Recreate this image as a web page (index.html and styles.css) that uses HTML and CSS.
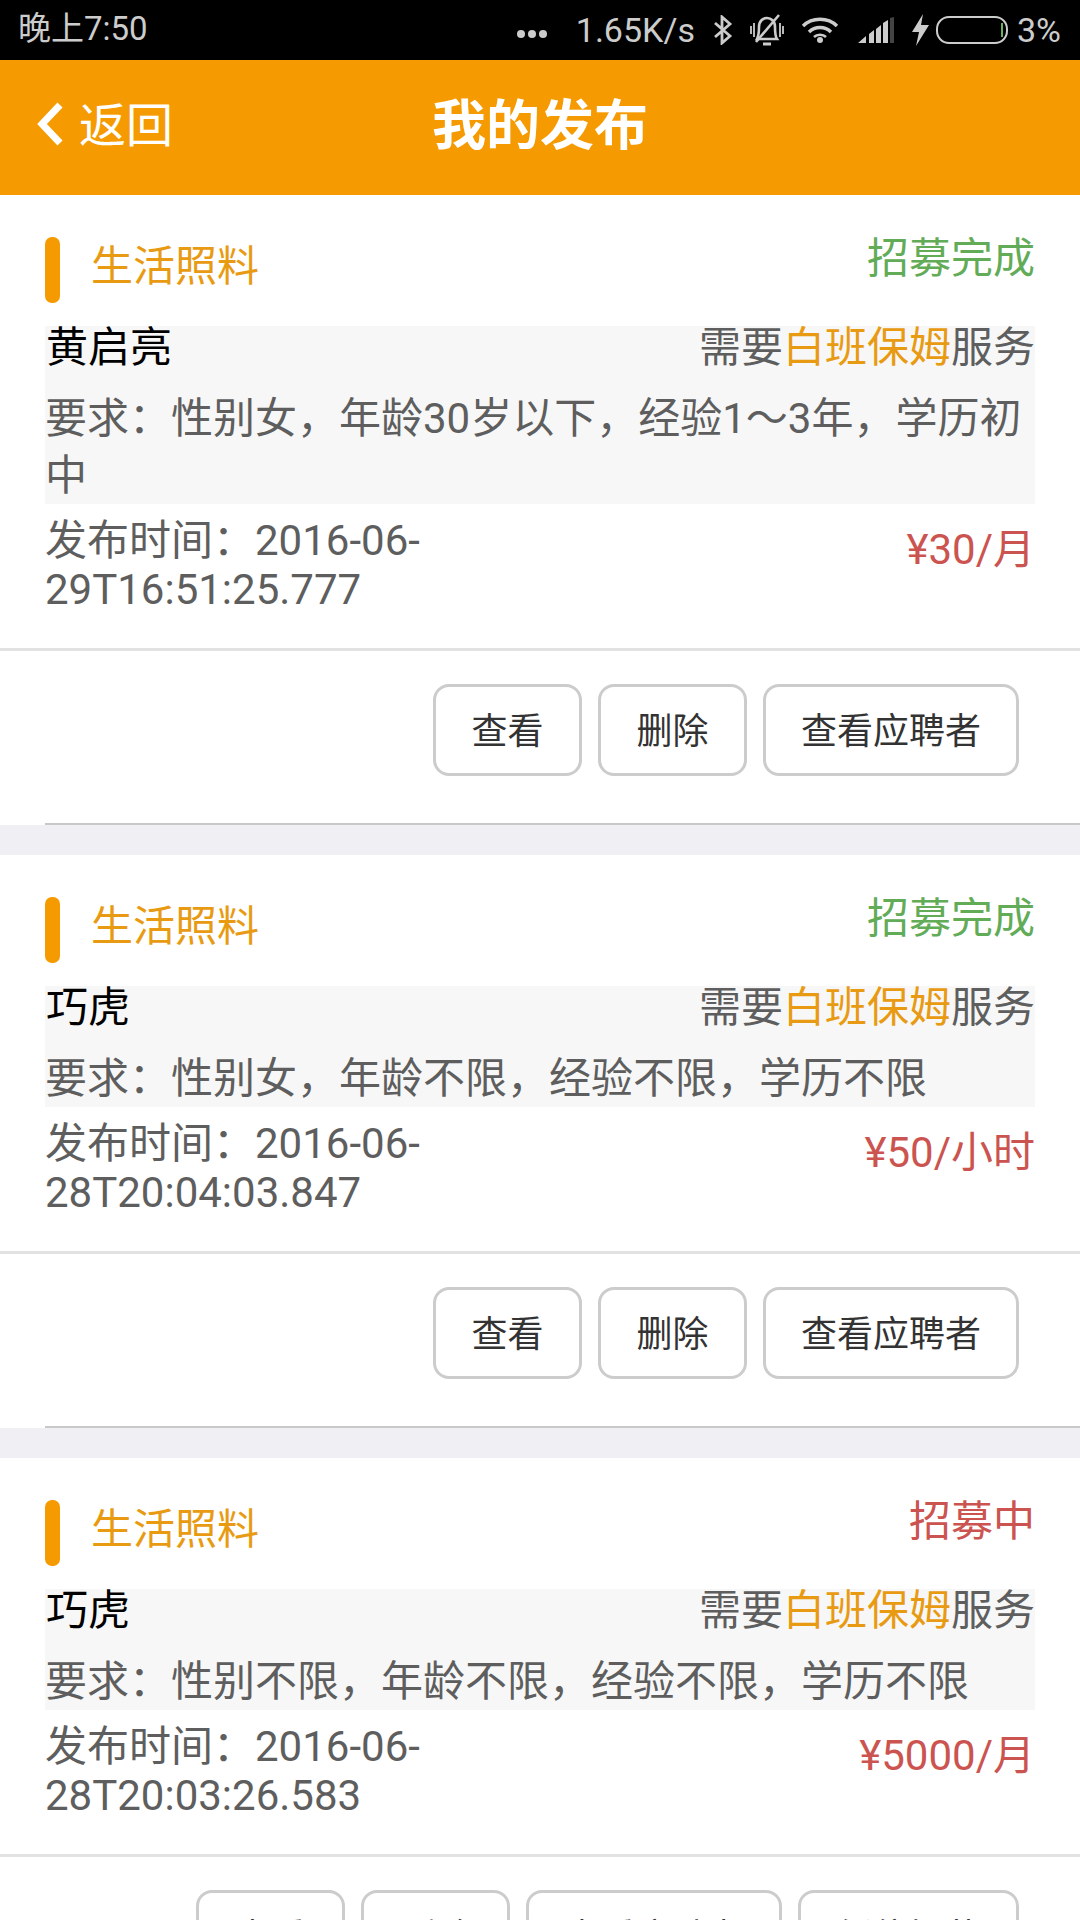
FILE: index.html
```html
<!DOCTYPE html>
<html lang="zh-CN">
  <head>
    <meta charset="UTF-8" />
    <title>我的发布</title>
    <link rel="stylesheet" href="styles.css">
  </head>
  <body>
    <div class="page">
      <div class="status-bar">
        <span class="clock">晚上7:50</span>
        <div class="status-right">
          <svg class="ic-dots" width="32" height="10" viewBox="0 0 32 10"><circle cx="5" cy="5" r="4" fill="#ccc"/><circle cx="16" cy="5" r="4" fill="#ccc"/><circle cx="27" cy="5" r="4" fill="#ccc"/></svg>
          <span class="speed">1.65K/s</span>
          <svg class="ic-bt" width="20" height="30" viewBox="0 0 20 30"><path d="M2 8 L17 21 L9 28 V2 L17 9 L2 22" fill="none" stroke="#ccc" stroke-width="2.8"/></svg>
          <svg class="ic-bell" width="34" height="32" viewBox="0 0 34 32"><path d="M7 25 C9 21 9 17 9 13 C9 7 13 4 17 4 C21 4 25 7 25 13 C25 18 25 22 27 25 Z" fill="none" stroke="#ccc" stroke-width="2.6"/><path d="M13 30 H21" stroke="#ccc" stroke-width="3"/><path d="M6 28 L29 1" stroke="#ccc" stroke-width="2.6"/><path d="M1 12 V20 M4 9 V23 M30 9 V23 M33 12 V20" stroke="#ccc" stroke-width="1.8"/></svg>
          <svg class="ic-wifi" width="38" height="26" viewBox="0 0 38 26"><path d="M2 9 C11 0 27 0 36 9" fill="none" stroke="#ccc" stroke-width="3.4"/><path d="M8 15 C14 9 24 9 30 15" fill="none" stroke="#ccc" stroke-width="3.4"/><path d="M13 20 C16 17 22 17 25 20" fill="none" stroke="#ccc" stroke-width="2.6"/><circle cx="19" cy="23" r="3" fill="#ccc"/></svg>
          <svg class="ic-signal" width="36" height="26" viewBox="0 0 36 26"><path d="M0 26 L8 19 V26 Z M11 26 V17 L16 13 V26 Z M18 26 V12 L23 8 V26 Z M25 26 V6 L30 3 V26 Z" fill="#ccc"/><path d="M32 26 V1 L36 0 V26 Z" fill="#444"/></svg>
          <svg class="ic-bolt" width="17" height="32" viewBox="0 0 17 32"><path d="M11 0 L0 18 H7 L4 32 L17 11 H9 Z" fill="#ccc"/></svg>
          <svg class="ic-battery" width="72" height="30" viewBox="0 0 72 30"><rect x="1" y="2" width="70" height="26" rx="12" fill="none" stroke="#ccc" stroke-width="2"/><rect x="65" y="8" width="2" height="14" fill="#6db35a"/></svg>
          <span class="percent">3%</span>
        </div>
      </div>

      <div class="nav-bar">
        <a class="back">
          <svg width="28" height="48" viewBox="0 0 28 48"><path d="M24 7 L6 26 L24 45" fill="none" stroke="#fff" stroke-width="7"/></svg>
          <span>返回</span>
        </a>
        <h1>我的发布</h1>
      </div>

      <div class="card">
        <div class="card-head">
          <div class="cat"><i class="mark"></i><span>生活照料</span></div>
          <span class="state done">招募完成</span>
        </div>
        <div class="info">
          <div class="info-top">
            <span class="name">黄启亮</span>
            <span class="need">需要<em>白班保姆</em>服务</span>
          </div>
          <div class="req">要求：性别女，年龄30岁以下，经验1～3年，学历初中</div>
        </div>
        <div class="time-row">
          <div class="time">发布时间：2016-06-29T16:51:25.777</div>
          <div class="price">¥30/月</div>
        </div>
        <div class="actions">
          <button>查看</button>
          <button>删除</button>
          <button class="wide">查看应聘者</button>
        </div>
      </div>

      <div class="card">
        <div class="card-head">
          <div class="cat"><i class="mark"></i><span>生活照料</span></div>
          <span class="state done">招募完成</span>
        </div>
        <div class="info">
          <div class="info-top">
            <span class="name">巧虎</span>
            <span class="need">需要<em>白班保姆</em>服务</span>
          </div>
          <div class="req">要求：性别女，年龄不限，经验不限，学历不限</div>
        </div>
        <div class="time-row">
          <div class="time">发布时间：2016-06-28T20:04:03.847</div>
          <div class="price">¥50/小时</div>
        </div>
        <div class="actions">
          <button>查看</button>
          <button>删除</button>
          <button class="wide">查看应聘者</button>
        </div>
      </div>

      <div class="card">
        <div class="card-head">
          <div class="cat"><i class="mark"></i><span>生活照料</span></div>
          <span class="state doing">招募中</span>
        </div>
        <div class="info">
          <div class="info-top">
            <span class="name">巧虎</span>
            <span class="need">需要<em>白班保姆</em>服务</span>
          </div>
          <div class="req">要求：性别不限，年龄不限，经验不限，学历不限</div>
        </div>
        <div class="time-row">
          <div class="time">发布时间：2016-06-28T20:03:26.583</div>
          <div class="price">¥5000/月</div>
        </div>
        <div class="actions">
          <button>查看</button>
          <button>删除</button>
          <button class="wide">查看应聘者</button>
          <button class="wide2">暂停招募</button>
        </div>
      </div>
    </div>
  </body>
</html>
```

FILE: styles.css
```css
html, body {
  margin: 0;
  padding: 0;
}
body {
  font-family: Roboto, "Noto Sans CJK SC", sans-serif;
  background-color: #efeff4;
}
.page {
  width: 1080px;
  height: 1920px;
  overflow: hidden;
}
.status-bar {
  height: 60px;
  background-color: #000;
  color: #ccc;
  font-size: 33px;
  line-height: 58px;
  display: flex;
  align-items: flex-start;
  justify-content: space-between;
  padding: 0 19px 0 18px;
}
.status-right {
  display: flex;
  align-items: center;
  height: 60px;
}
.speed { font-size: 34px; }
.ic-dots { margin-top: 8px; margin-right: 28px; }
.ic-bt { margin-left: 18px; }
.ic-bell { margin-left: 17px; }
.ic-wifi { margin-left: 17px; }
.ic-signal { margin-left: 19px; }
.ic-bolt { margin-left: 18px; }
.ic-battery { margin-left: 7px; }
.percent { margin-left: 9px; font-size: 34px; }

.nav-bar {
  height: 135px;
  box-sizing: border-box;
  padding-bottom: 12px;
  background-color: #f59a00;
  color: #fff;
  display: flex;
  align-items: center;
  justify-content: center;
  position: relative;
}
.nav-bar h1 {
  margin: 0;
  font-size: 54px;
  font-weight: bold;
}
.back {
  position: absolute;
  left: 36px;
  top: 0;
  height: 123px;
  display: flex;
  align-items: center;
  gap: 15px;
  font-size: 47px;
}

.card {
  background-color: #fff;
  margin-bottom: 30px;
}
.card-head {
  height: 131px;
  display: flex;
  justify-content: space-between;
  padding: 0 45px;
  box-sizing: border-box;
}
.cat {
  display: flex;
  height: 66px;
  margin-top: 42px;
  color: #e89b12;
  font-size: 42px;
  line-height: 60px;
}
.mark {
  width: 15px;
  height: 66px;
  border-radius: 7px;
  background-color: #f59a00;
  margin-right: 31px;
}
.state {
  font-size: 42px;
  line-height: 50px;
  margin-top: 39px;
}
.state.done { color: #62ab57; }
.state.doing { color: #cb5450; }

.info {
  margin: 0 45px;
  background-color: #f7f7f7;
  font-size: 42px;
}
.info-top {
  height: 64px;
  line-height: 44px;
  display: flex;
  justify-content: space-between;
  align-items: flex-start;
}
.name {
  color: #000;
  margin-left: 1px;
}
.need {
  color: #5e5e5e;
}
.need em {
  font-style: normal;
  color: #e89b12;
}
.req {
  color: #5e5e5e;
  line-height: 57px;
}
.time-row {
  height: 147px;
  padding: 12px 45px 0;
  box-sizing: border-box;
  display: flex;
  justify-content: space-between;
  border-bottom: 3px solid #e2e2e2;
}
.time {
  width: 420px;
  color: #5e5e5e;
  font-size: 42px;
  line-height: 49px;
}
.price {
  color: #cb5450;
  font-size: 42px;
  line-height: 50px;
  margin-top: 9px;
}
.actions {
  height: 174px;
  box-sizing: border-box;
  margin-left: 45px;
  padding: 33px 61px 0 0;
  display: flex;
  justify-content: flex-end;
  align-items: flex-start;
  gap: 16px;
  border-bottom: 2px solid #c8c8c8;
}
.actions button {
  width: 149px;
  height: 92px;
  background-color: #fff;
  border: 3px solid #ccc;
  border-radius: 16px;
  color: #333;
  font-family: inherit;
  font-size: 36px;
  padding: 0 0 4px;
}
.actions .wide { width: 256px; }
.actions .wide2 { width: 221px; }
```
